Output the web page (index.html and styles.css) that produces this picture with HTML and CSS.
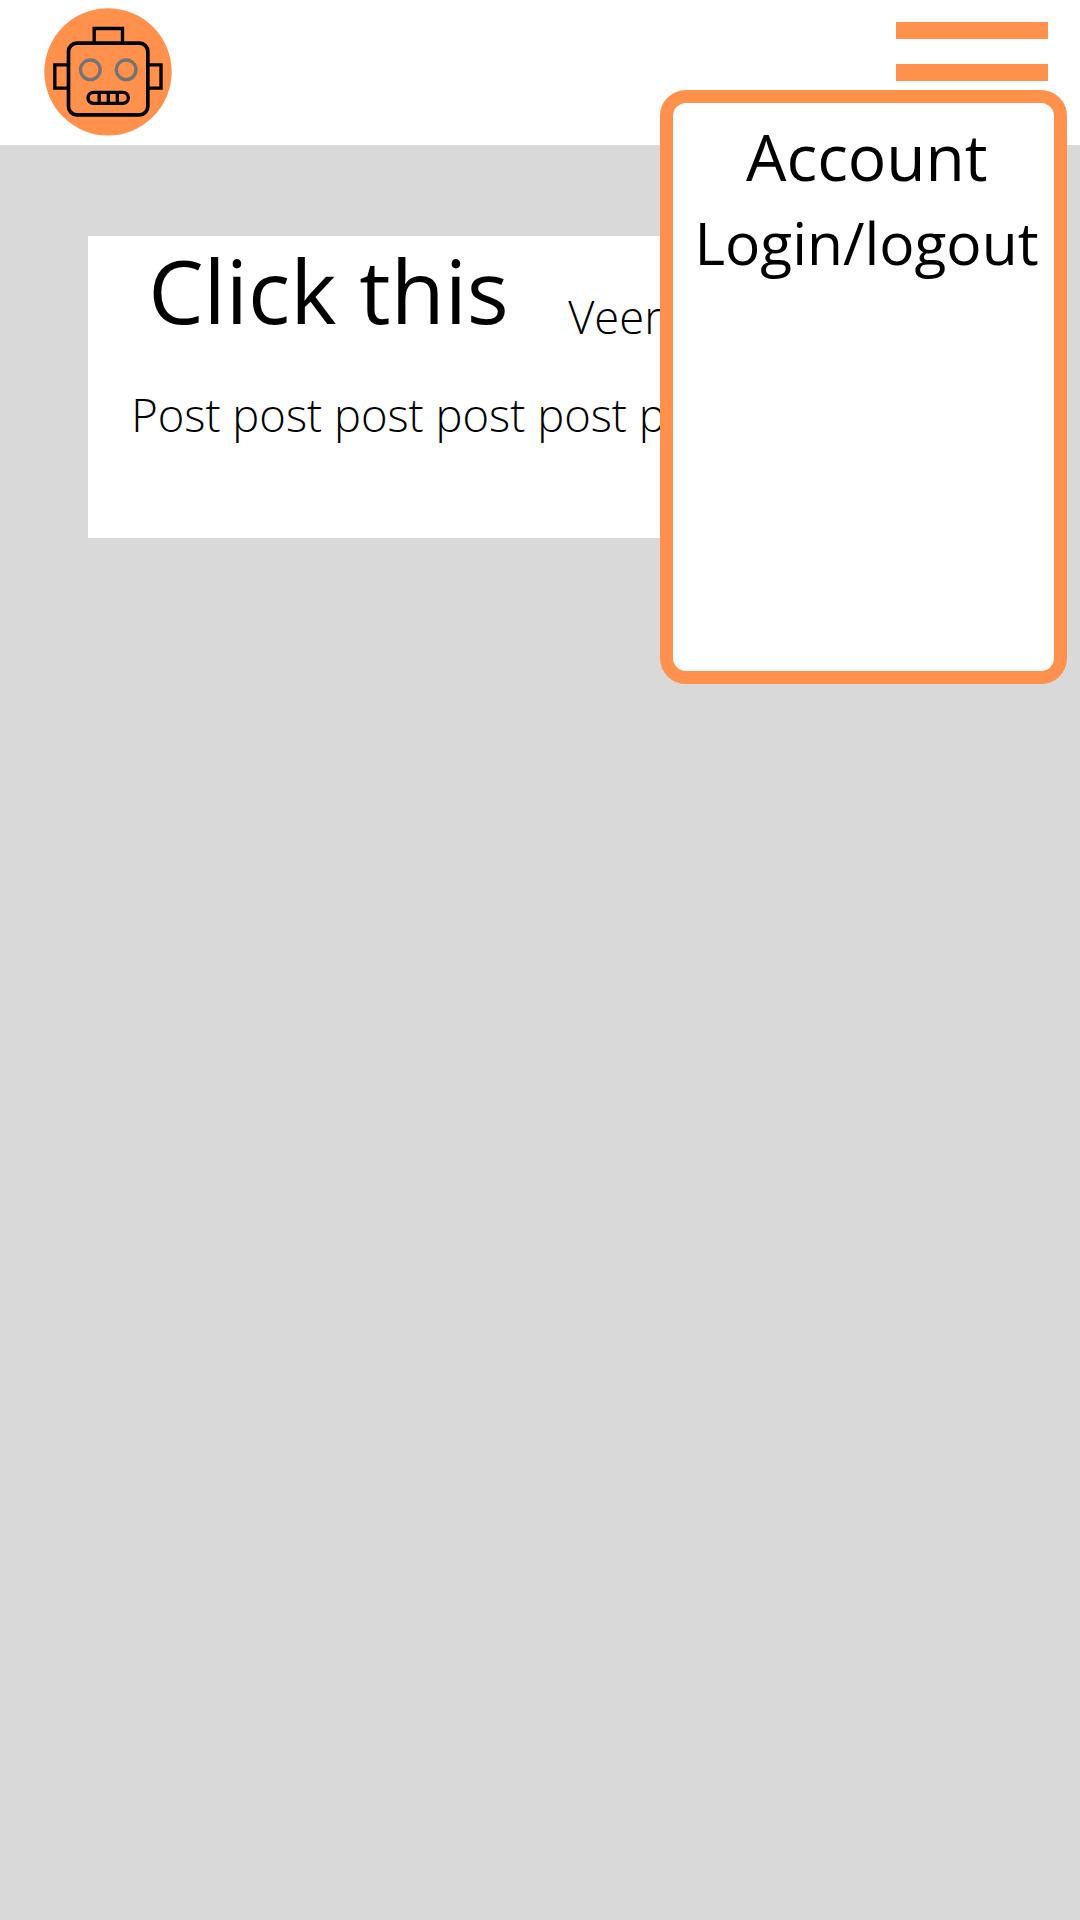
FILE: index.html
```html
<!DOCTYPE html>
<html lang="en">
<head>
<meta charset="utf-8">
<title>Posts</title>
<link rel="stylesheet" href="styles.css">
</head>
<body>
<header class="header">
  <svg class="logo" viewBox="42 25 384 384" fill="none" stroke="#000" stroke-width="11">
    <circle cx="234" cy="216.500" r="191" fill="#ff914d" stroke="none"/>
    <rect x="115.500" y="130.500" width="238" height="215" rx="25"/>
    <path d="M192.500 130V86.500H277.500V130M115 195.500H74.500V265.500H115M354 195.500H393V265.500H354" stroke-width="10"/>
    <circle cx="181" cy="210.500" r="29.500" stroke="#737373" stroke-width="10"/>
    <circle cx="288.500" cy="210.500" r="29.500" stroke="#737373" stroke-width="10"/>
    <rect x="174" y="278" width="121" height="33" rx="16.500" stroke-width="10"/>
    <path d="M207.500 278V311M235 278V311M262 278V311" stroke-width="10"/>
  </svg>
  <div class="menu-button"><span class="bar"></span><span class="bar"></span></div>
  <nav class="menu">
    <a class="account">Account</a>
    <a class="login">Login/logout</a>
  </nav>
</header>
<main class="feed">
  <article class="post">
    <div class="post-head">
      <h1 class="title">Click this</h1>
      <span class="author">Veer</span>
    </div>
    <p class="body">Post post post post post p</p>
  </article>
</main>
</body>
</html>
```
FILE: styles.css
```css
* { box-sizing: border-box; }
body {
  margin: 0;
  min-height: 1920px;
  background: #d9d9d9;
  color: #000;
  font-family: "Open Sans", sans-serif;
}
.header {
  position: relative;
  display: flex;
  justify-content: space-between;
  align-items: flex-start;
  height: 145px;
  padding: 8.3px 32px 0 44px;
  background: #fff;
}
.logo { width: 128px; height: 128px; }
.menu-button {
  display: flex;
  flex-direction: column;
  gap: 25px;
  width: 152px;
  padding-top: 13.3px;
}
.bar { height: 17px; background: #ff914d; }
.menu {
  position: absolute;
  z-index: 1;
  left: 660px;
  top: 90px;
  display: flex;
  flex-direction: column;
  gap: 5px;
  width: 407px;
  height: 594px;
  padding-top: 14px;
  border: 13px solid #ff914d;
  border-radius: 26px;
  background: #fff;
  line-height: 80px;
  white-space: nowrap;
}
.account { padding-left: 73px; font-size: 64px; }
.login { padding-left: 21.4px; font-size: 58.67px; }
.feed { padding: 91.4px 88px 0; }
.post {
  height: 302px;
  padding: 3.6px 0 0 43.2px;
  background: #fff;
  white-space: nowrap;
}
.post-head { display: flex; height: 145.5px; }
.title {
  width: 437px;
  margin: 0;
  padding-left: 17px;
  font-size: 88px;
  font-weight: 400;
  line-height: 100px;
}
.author, .body {
  font-size: 45.33px;
  font-weight: 300;
  line-height: 60px;
}
.author { padding-top: 47px; }
.body { margin: 0; }
```
